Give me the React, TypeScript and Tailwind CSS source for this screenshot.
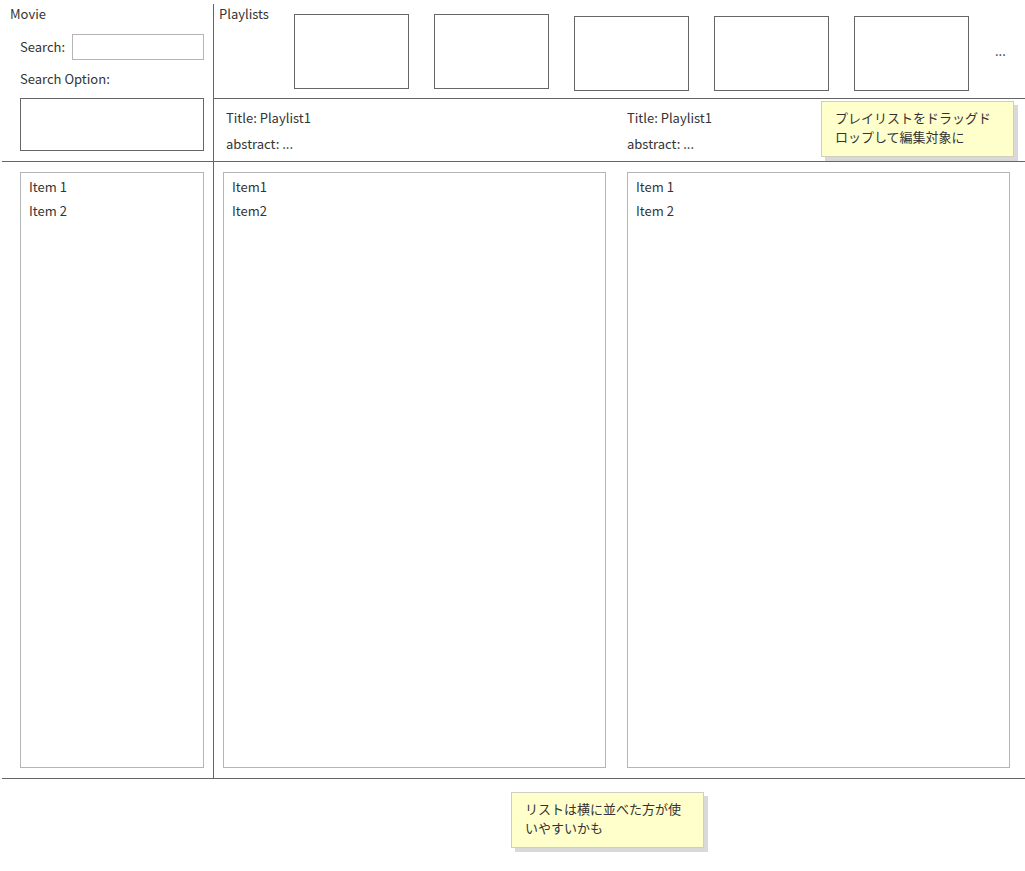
const font = { fontFamily: '"Noto Sans CJK JP", "Noto Sans", sans-serif' };

function Note({ lines, className }: { lines: string[]; className: string }) {
  return (
    <div
      className={`absolute bg-[#ffffcc] border border-[#cfcfc0] shadow-[4px_4px_0_#d9d9d9] pl-[13px] pt-[6px] text-[13px] leading-[19px] text-[#333] ${className}`}
    >
      {lines.map((l) => (
        <div key={l}>{l}</div>
      ))}
    </div>
  );
}

function ItemList({ items, className }: { items: string[]; className: string }) {
  return (
    <div className={`border border-[#b5b5b5] pt-[2px] pl-[8px] ${className}`}>
      {items.map((it) => (
        <div key={it} className="leading-[24px]">
          {it}
        </div>
      ))}
    </div>
  );
}

const playlistBoxes = [0, 0, 2, 2, 2];

export default function App() {
  return (
    <div
      className="relative w-[1025px] h-[871px] bg-white text-[13px] text-[#333] pt-[4px] pl-[2px]"
      style={font}
    >
      {/* top row */}
      <div className="flex h-[158px] border-b border-[#666]">
        <div className="w-[212px] border-r border-[#666] flex flex-col">
          <div className="pl-[8px] leading-[20px] h-[20px]">Movie</div>
          <div className="flex items-center mt-[10px] pl-[18px] h-[26px]">
            <span>Search:</span>
            <div className="ml-[7px] w-[132px] h-[26px] border border-[#b5b5b5]" />
          </div>
          <div className="mt-[9px] pl-[18px] leading-[20px] h-[20px]">Search Option:</div>
          <div className="mt-[9px] ml-[18px] w-[184px] h-[53px] border border-[#666]" />
        </div>
        <div className="flex-1 flex flex-col">
          <div className="h-[95px] border-b border-[#666] flex">
            <div className="pl-[5px] leading-[20px] w-[80px]">Playlists</div>
            <div className="flex gap-[25px] pt-[10px]">
              {playlistBoxes.map((off, i) => (
                <div
                  key={i}
                  className={`w-[115px] h-[75px] border border-[#666] ${off ? 'mt-[2px]' : ''}`}
                />
              ))}
            </div>
            <div className="ml-[26px] pt-[37px] leading-[20px]">...</div>
          </div>
          <div className="flex pl-[12px] pt-[6px]">
            <div className="w-[401px] leading-[26px]">
              <div>Title: Playlist1</div>
              <div>abstract: ...</div>
            </div>
            <div className="leading-[26px]">
              <div>Title: Playlist1</div>
              <div>abstract: ...</div>
            </div>
          </div>
        </div>
      </div>

      {/* lists row */}
      <div className="flex h-[617px] border-b border-[#666]">
        <div className="w-[212px] border-r border-[#666] pt-[10px] pl-[18px]">
          <ItemList items={['Item 1', 'Item 2']} className="w-[184px] h-[596px]" />
        </div>
        <div className="flex-1 flex pt-[10px] pl-[9px] gap-[21px]">
          <ItemList items={['Item1', 'Item2']} className="w-[383px] h-[596px]" />
          <ItemList items={['Item 1', 'Item 2']} className="w-[383px] h-[596px]" />
        </div>
      </div>

      <Note
        lines={['プレイリストをドラッグド', 'ロップして編集対象に']}
        className="left-[821px] top-[101px] w-[193px] h-[56px]"
      />
      <Note
        lines={['リストは横に並べた方が使', 'いやすいかも']}
        className="left-[511px] top-[792px] w-[193px] h-[56px]"
      />
    </div>
  );
}
